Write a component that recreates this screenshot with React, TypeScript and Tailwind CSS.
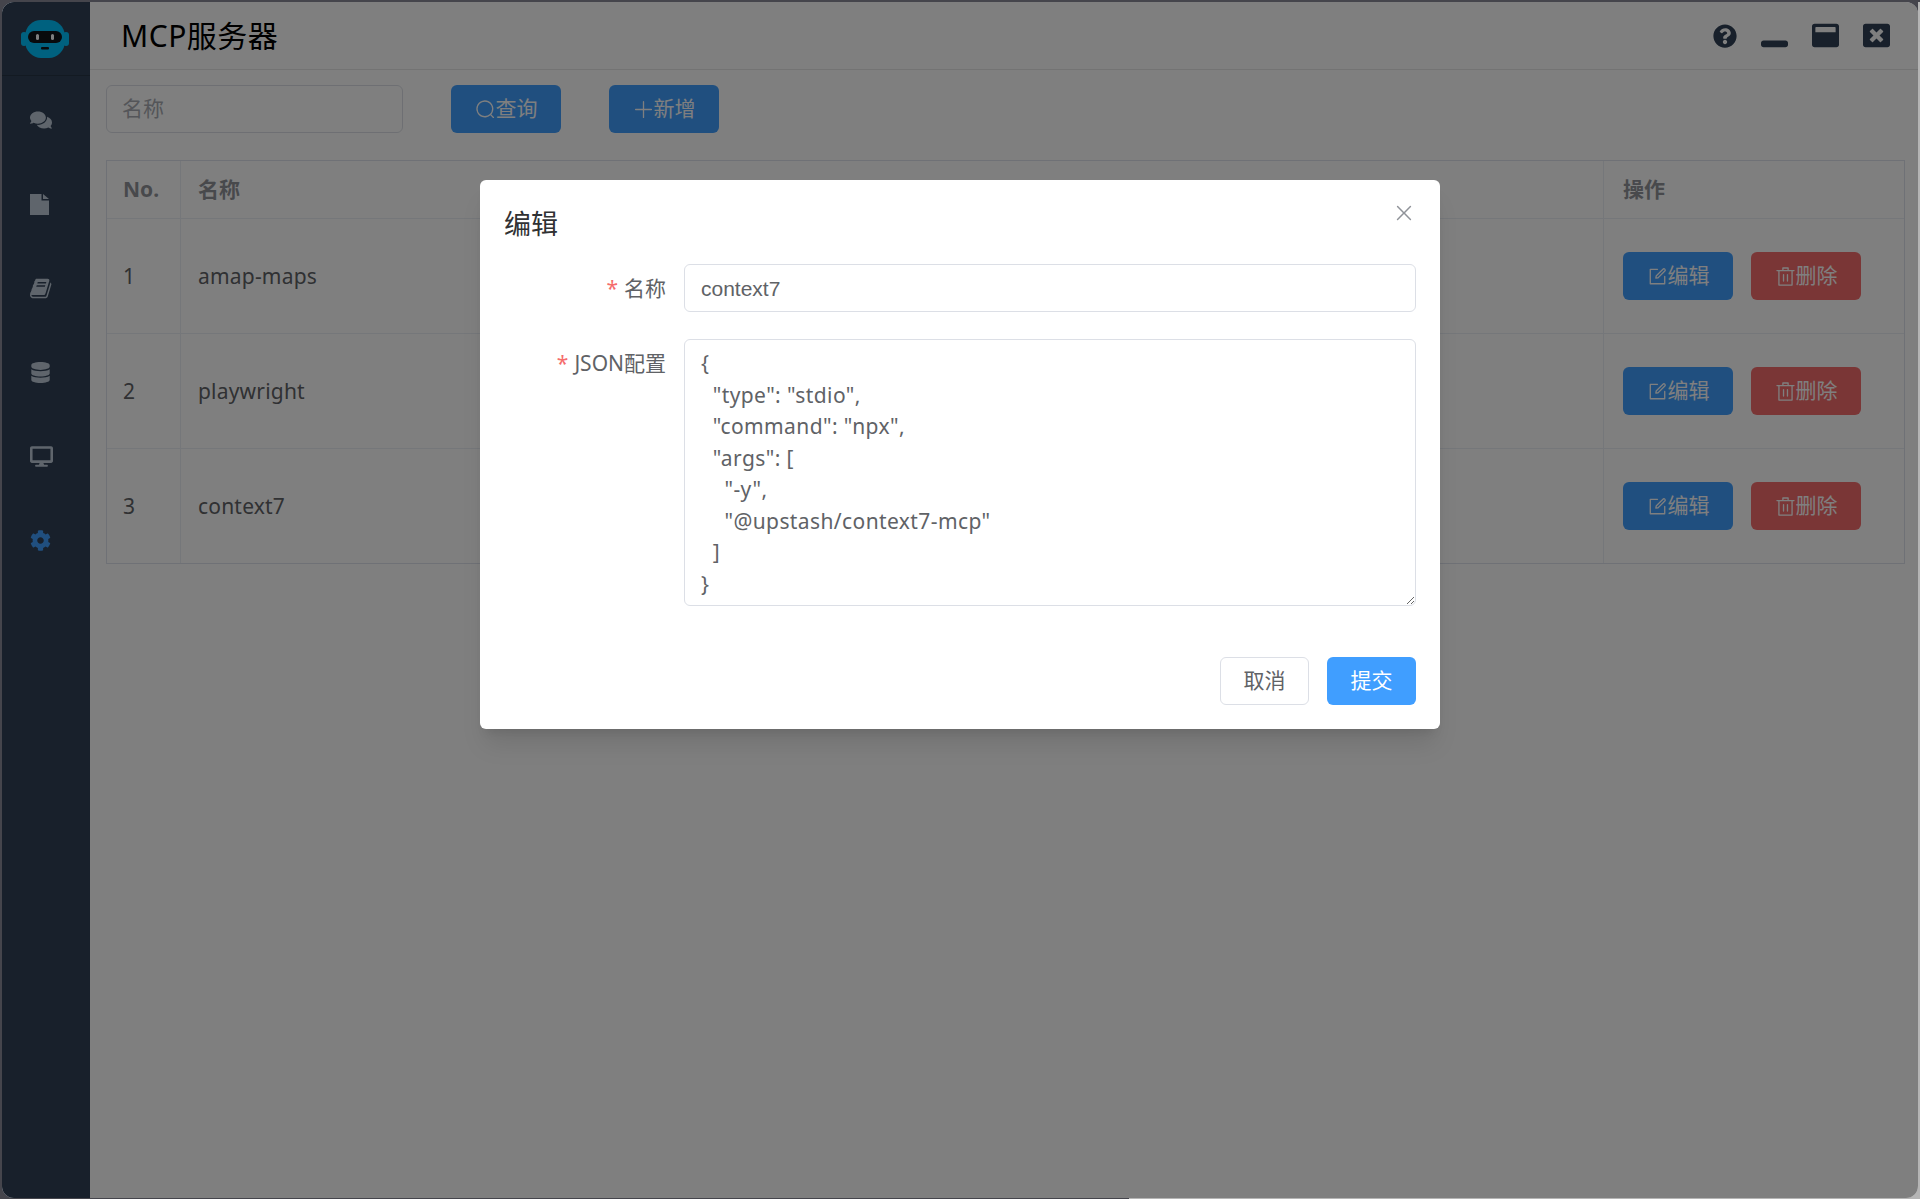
import { FaCog, FaComments, FaDatabase, FaDesktop, FaQuestionCircle, FaWindowClose, FaWindowMaximize, FaWindowMinimize } from "react-icons/fa";

/* ── Element-style icons ─────────────────────────────────────────────────── */
function EpIcon({ d, className }: { d: string[]; className?: string }) {
  return (
    <svg viewBox="0 0 1024 1024" fill="currentColor" className={className}>
      {d.map((p) => <path key={p} d={p} />)}
    </svg>
  );
}

const searchPath = ["m795.904 750.72 124.992 124.928a32 32 0 0 1-45.248 45.248L750.656 795.904a416 416 0 1 1 45.248-45.248zM480 832a352 352 0 1 0 0-704 352 352 0 0 0 0 704"];
const plusPath = ["M480 480V128a32 32 0 0 1 64 0v352h352a32 32 0 1 1 0 64H544v352a32 32 0 1 1-64 0V544H128a32 32 0 0 1 0-64z"];
const editPath = [
  "M832 512a32 32 0 1 1 64 0v352a32 32 0 0 1-32 32H160a32 32 0 0 1-32-32V160a32 32 0 0 1 32-32h352a32 32 0 0 1 0 64H192v640h640z",
  "m469.952 554.24 52.8-7.552L847.104 222.4a32 32 0 1 0-45.248-45.248L477.44 501.44l-7.552 52.8zm422.4-422.4a96 96 0 0 1 0 135.808l-331.84 331.84a32 32 0 0 1-18.112 9.088L436.8 623.68a32 32 0 0 1-36.224-36.224l15.104-105.6a32 32 0 0 1 9.024-18.112l331.904-331.84a96 96 0 0 1 135.744 0z",
];
const deletePath = ["M160 256H96a32 32 0 0 1 0-64h256V95.936a32 32 0 0 1 32-32h256a32 32 0 0 1 32 32V192h256a32 32 0 1 1 0 64h-64v672a32 32 0 0 1-32 32H192a32 32 0 0 1-32-32zm448-64v-64H416v64zM224 896h576V256H224zm192-128a32 32 0 0 1-32-32V416a32 32 0 0 1 64 0v320a32 32 0 0 1-32 32m192 0a32 32 0 0 1-32-32V416a32 32 0 0 1 64 0v320a32 32 0 0 1-32 32"];
const closePath = ["M764.288 214.592 512 466.88 259.712 214.592a31.936 31.936 0 0 0-45.12 45.12L466.752 512 214.528 764.224a31.936 31.936 0 1 0 45.12 45.184L512 557.184l252.288 252.288a31.936 31.936 0 0 0 45.12-45.12L557.12 512.064l252.288-252.352a31.936 31.936 0 1 0-45.12-45.184z"];

const servers = ["amap-maps", "playwright", "context7"];

const jsonConfig = `{
  "type": "stdio",
  "command": "npx",
  "args": [
    "-y",
    "@upstash/context7-mcp"
  ]
}`;

function Logo() {
  return (
    <svg viewBox="0 0 48 38" className="h-[38px] w-[48px]">
      <rect x="0" y="12" width="6" height="14" rx="3" fill="#00c2ff" />
      <rect x="42" y="12" width="6" height="14" rx="3" fill="#00c2ff" />
      <path d="M4 17C4 6 12 0 20 0h8c8 0 16 6 16 17v4c0 10-8 17-16 17h-8C12 38 4 31 4 21z" fill="#00c2ff" />
      <rect x="7" y="11" width="34" height="12" rx="6" fill="#101418" />
      <rect x="15" y="14" width="3" height="6" rx="1.5" fill="#ffffff" />
      <rect x="30" y="14" width="3" height="6" rx="1.5" fill="#ffffff" />
      <rect x="20" y="27" width="8" height="2.5" rx="1" fill="#101418" />
    </svg>
  );
}

function FileIcon() {
  return (
    <svg viewBox="0 0 19 21" fill="currentColor" className="h-[21px] w-[19px]">
      <path d="M0 0h11.5v6.5H19V21H0zM13 0l6 5h-6z" />
    </svg>
  );
}

function BookIcon() {
  return (
    <svg viewBox="0 0 1792 1792" fill="currentColor" className="h-[23px] w-[23px]">
      <path d="M1639 478q40 57 18 129l-275 906q-19 64-76.5 107.5t-122.5 43.5h-923q-77 0-148.5-53.5t-99.5-131.5q-24-67-2-127 0-4 3-27t4-37q1-8-3-21.5t-3-19.5q2-11 8-21t16.5-23.5 16.5-23.5q23-38 45-91.5t30-91.5q3-10 .5-30t-.5-28q3-11 17-28t17-23q21-36 42-92t25-90q1-9-2.5-32t.5-28q4-13 22-30.5t22-22.5q19-26 42.5-84.5t27.5-96.5q1-8-3-25.5t-2-26.5q2-8 9-18t18-23 17-21q8-12 16.5-30.5t15-35 16-36 19.5-32 26.5-23.5 36-11.5 47.5 5.5l-1 3q38-9 51-9h761q74 0 114 56t18 130l-274 906q-36 119-71.5 153.5t-128.5 34.5h-869q-27 0-38 15-11 16-1 43 24 70 144 70h923q29 0 56-15.5t35-41.5l300-987q7-22 5-57 38 15 59 43zm-1064 2q-4 13 2 22.5t20 9.5h608q13 0 25.5-9.5t16.5-22.5l21-64q4-13-2-22.5t-20-9.5h-608q-13 0-25.5 9.5t-16.5 22.5zm-83 256q-4 13 2 22.5t20 9.5h608q13 0 25.5-9.5t16.5-22.5l21-64q4-13-2-22.5t-20-9.5h-608q-13 0-25.5 9.5t-16.5 22.5z" />
    </svg>
  );
}

function Sidebar() {
  return (
    <aside className="flex w-[88px] shrink-0 flex-col bg-[#304156]">
      <div className="flex h-[74px] items-center justify-center border-b border-[#263445] pr-[2px]">
        <Logo />
      </div>
      <div className="flex flex-col pt-[2px] pl-[28px] text-[#bfcbd9]">
        <div className="flex h-[84px] items-center text-[22px]"><FaComments /></div>
        <div className="flex h-[84px] items-center"><FileIcon /></div>
        <div className="flex h-[84px] items-center"><BookIcon /></div>
        <div className="flex h-[84px] items-center text-[21px]"><FaDatabase /></div>
        <div className="flex h-[84px] items-center text-[23px]"><FaDesktop /></div>
        <div className="flex h-[84px] items-center text-[21px] text-[#409eff]"><FaCog /></div>
      </div>
    </aside>
  );
}

function RowButton({ kind }: { kind: "edit" | "delete" }) {
  const isEdit = kind === "edit";
  return (
    <button className={`flex h-[48px] w-[110px] items-center justify-center rounded-[6px] text-[21px] text-white ${isEdit ? "bg-[#409eff]" : "bg-[#f56c6c]"}`}>
      <EpIcon d={isEdit ? editPath : deletePath} className="h-[21px] w-[21px]" />
      {isEdit ? "编辑" : "删除"}
    </button>
  );
}

function ServerTable() {
  return (
    <div className="mt-[27px] mr-[13px] ml-[16px] border border-[#dfe3ec] text-[21px] text-[#606266]">
      <div className="flex h-[58px] items-center border-b border-[#ebeef5] font-bold text-[#909399]">
        <div className="flex h-full w-[74px] items-center border-r border-[#ebeef5] pl-[16px]">No.</div>
        <div className="flex h-full flex-1 items-center border-r border-[#ebeef5] pl-[17px]">名称</div>
        <div className="flex h-full w-[300px] items-center pl-[19px]">操作</div>
      </div>
      {servers.map((name, i) => (
        <div key={name} className={`flex items-center ${i < servers.length - 1 ? "h-[115px] border-b border-[#ebeef5]" : "h-[114px]"}`}>
          <div className="flex h-full w-[74px] items-center border-r border-[#ebeef5] pt-[2px] pl-[16px]">{i + 1}</div>
          <div className="flex h-full flex-1 items-center border-r border-[#ebeef5] pt-[2px] pl-[17px] tracking-[0.2px]">{name}</div>
          <div className="flex h-full w-[300px] items-center gap-[18px] pl-[19px]">
            <RowButton kind="edit" />
            <RowButton kind="delete" />
          </div>
        </div>
      ))}
    </div>
  );
}

function EditDialog() {
  return (
    <div className="absolute inset-0 flex justify-center bg-black/50 pt-[178px]">
      <div className="relative h-[549px] w-[960px] rounded-[6px] bg-white shadow-xl">
        <div className="px-[24px] pt-[24px] text-[27px] leading-[40px] text-[#303133]">编辑</div>
        <button className="absolute top-[21px] right-[24px] text-[#909399]">
          <EpIcon d={closePath} className="h-[24px] w-[24px]" />
        </button>
        <div className="mt-[20px] flex items-center pr-[24px] pl-[24px] text-[21px] text-[#606266]">
          <label className="w-[180px] pt-[1px] pr-[18px] text-right whitespace-nowrap"><span className="mr-[6px] text-[#f56c6c]">*</span>名称</label>
          <div className="flex h-[48px] flex-1 items-center rounded-[6px] border border-[#dcdfe6] px-[16px] pt-[1px] font-['Liberation_Sans',sans-serif]">context7</div>
        </div>
        <div className="mt-[27px] flex items-start pr-[24px] pl-[24px] text-[21px] text-[#606266]">
          <label className="w-[180px] pt-[9px] pr-[18px] text-right whitespace-nowrap"><span className="mr-[6px] text-[#f56c6c]">*</span>JSON配置</label>
          <textarea
            readOnly
            value={jsonConfig}
            className="h-[267px] flex-1 resize-y overflow-hidden rounded-[6px] border border-[#dcdfe6] px-[16px] py-[8px] text-[21px] leading-[31.5px] tracking-[0.4px] outline-none"
          />
        </div>
        <div className="mt-[51px] flex justify-end gap-[18px] pr-[24px]">
          <button className="h-[48px] w-[89px] rounded-[6px] border border-[#dcdfe6] text-[21px] text-[#606266]">取消</button>
          <button className="h-[48px] w-[89px] rounded-[6px] bg-[#409eff] text-[21px] text-white">提交</button>
        </div>
      </div>
    </div>
  );
}

export default function App() {
  return (
    <div className="flex h-[1199px] w-[1920px] flex-col overflow-hidden bg-[#45454c] font-['Noto_Sans','Noto_Sans_CJK_SC',sans-serif]">
      <div className="h-[2px] shrink-0" />
      <div className="flex min-h-0 flex-1 bg-[linear-gradient(to_right,#45454c_50%,transparent_50%),linear-gradient(to_bottom,#45454c_50%,#b5b5b5_50%)]">
        <div className="w-[2px] shrink-0" />
        <div className="relative flex min-w-0 flex-1 overflow-hidden rounded-[12px] bg-white">
          <Sidebar />
          <main className="flex min-w-0 flex-1 flex-col">
            <header className="flex h-[68px] shrink-0 items-center justify-between border-b border-[#e6e6e6] pr-[28px] pl-[31px]">
              <h1 className="text-[30px] tracking-[0.5px] text-black">MCP服务器</h1>
              <div className="flex items-center gap-[24px] text-[#304156]">
                <FaQuestionCircle className="text-[24px]" />
                <FaWindowMinimize className="text-[27px]" />
                <FaWindowMaximize className="text-[27px]" />
                <FaWindowClose className="text-[27px]" />
              </div>
            </header>
            <div className="mt-[15px] flex items-center pl-[16px]">
              <div className="flex h-[48px] w-[297px] items-center rounded-[6px] border border-[#dcdfe6] px-[15px] text-[21px] text-[#a8abb2]">名称</div>
              <button className="ml-[48px] flex h-[48px] w-[110px] items-center justify-center rounded-[6px] bg-[#409eff] text-[21px] text-white">
                <EpIcon d={searchPath} className="h-[21px] w-[21px]" />查询
              </button>
              <button className="ml-[48px] flex h-[48px] w-[110px] items-center justify-center rounded-[6px] bg-[#409eff] text-[21px] text-white">
                <EpIcon d={plusPath} className="h-[21px] w-[21px]" />新增
              </button>
            </div>
            <ServerTable />
          </main>
          <EditDialog />
        </div>
        <div className="w-[2px] shrink-0 bg-[#b5b5b5]" />
      </div>
      <div className="flex h-[1px] shrink-0">
        <div className="w-[1129px] bg-[#45454c]" />
        <div className="flex-1 bg-[#b5b5b5]" />
      </div>
    </div>
  );
}
